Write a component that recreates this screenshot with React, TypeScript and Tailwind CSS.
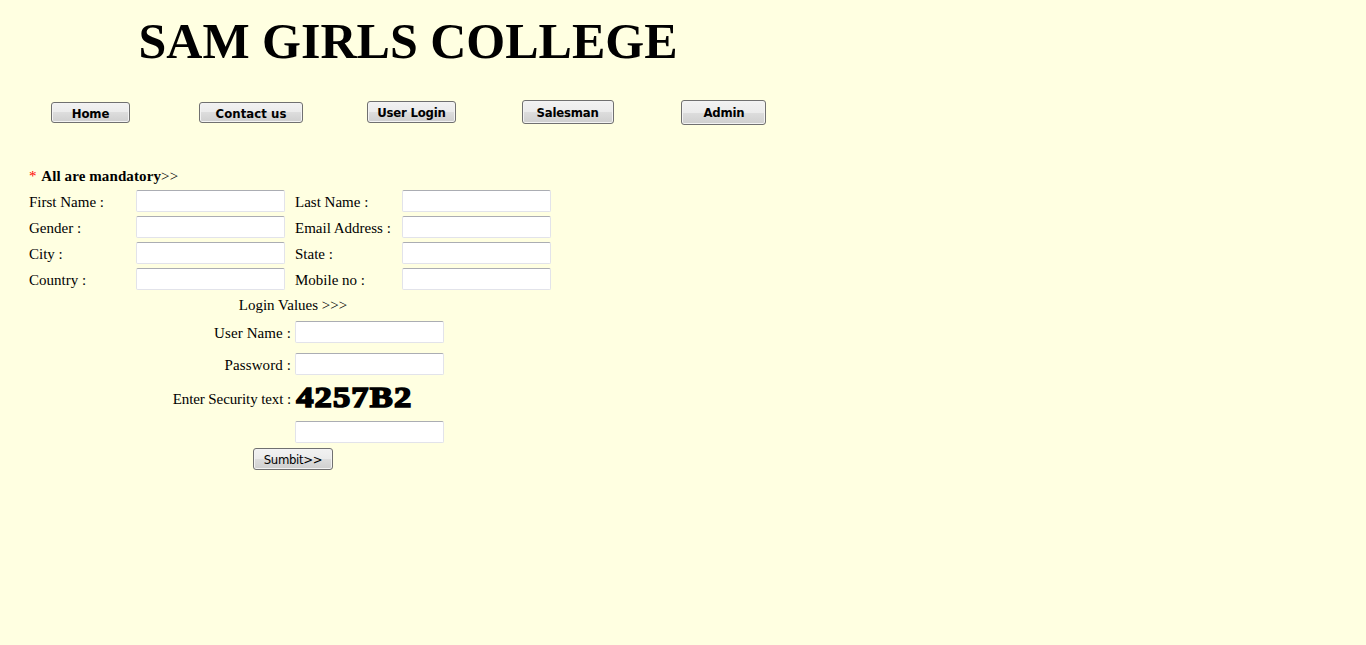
import React from "react";

const serif = "font-['Liberation_Serif','Times_New_Roman',serif]";
const buttonBase =
  "flex shrink-0 items-center justify-center rounded-[3px] border border-[#707070] bg-[linear-gradient(#f2f2f2_0%,#ebebeb_50%,#dddddd_50%,#cfcfcf_100%)] shadow-[inset_0_0_0_1px_#f3f3f3] font-['DejaVu_Sans_Condensed','DejaVu_Sans',sans-serif] text-[13px] leading-none text-black whitespace-pre";

const navItems = [
  { label: "Home", box: "mt-[2px] h-[21px] w-[79px]", text: "pt-px tracking-[-0.1px]" },
  { label: "Contact us", box: "mt-[2px] ml-[69px] h-[21px] w-[104px]", text: "pt-px tracking-[0.05px]" },
  { label: "User Login", box: "mt-px ml-[64px] h-[22px] w-[89px]", text: "tracking-[-0.2px]" },
  { label: "Salesman", box: "ml-[66px] h-[24px] w-[92px]", text: "-ml-px tracking-[-0.2px]" },
  { label: "Admin", box: "ml-[67px] h-[25px] w-[85px]", text: "ml-px tracking-[-0.2px]" },
];

const profileRows = [
  ["First Name :", "Last Name :"],
  ["Gender :", "Email Address :"],
  ["City :", "State :"],
  ["Country :", "Mobile no :"],
];

function Field({ label, type = "text" }: { label: string; type?: string }) {
  return (
    <input
      type={type}
      aria-label={label}
      className="block h-[22px] w-[149px] rounded-[2px] border border-[#e2e3ea] border-t-[#abadb3] bg-white px-1 text-[13px] outline-none"
    />
  );
}

export default function App() {
  return (
    <main className={`h-[645px] w-full overflow-hidden bg-[#ffffe1] text-[15px] leading-[18px] text-black ${serif}`}>
      <h1 className="h-[100px] pt-[13px] pl-[138.5px] text-[50px] leading-[56px] font-bold whitespace-nowrap">
        SAM GIRLS COLLEGE
      </h1>

      <nav className="flex h-[67px] items-start pl-[51px]">
        {navItems.map((item) => (
          <button key={item.label} className={`${buttonBase} font-bold ${item.box}`}>
            <span className={item.text}>{item.label}</span>
          </button>
        ))}
      </nav>

      <form className="pl-[29px]" onSubmit={(event) => event.preventDefault()}>
        <p className="h-[23px] whitespace-nowrap">
          <span className="text-[#ff0000]">*</span>{" "}
          <b className="ml-px tracking-[0.1px]">All are mandatory</b>
          <span className="tracking-[0.4px]">&gt;&gt;</span>
        </p>

        <div>
          {profileRows.map(([left, right]) => (
            <div key={left} className="grid h-[26px] grid-cols-[107px_159px_107px_149px] items-start">
              <span className="pt-[3px]">{left}</span>
              <Field label={left} />
              <span className="pt-[3px]">{right}</span>
              <Field label={right} />
            </div>
          ))}
        </div>

        <div className="w-[528px]">
          <p className="h-[27px] pt-[2px] text-center">Login Values &gt;&gt;&gt;</p>
          <div className="grid grid-cols-[262px_1fr] grid-rows-[32px_32px_36px_27px] gap-x-[4px]">
            <span className="pt-[3px] text-right tracking-[0.1px]">User Name :</span>
            <Field label="User Name" />
            <span className="pt-[3px] text-right tracking-[0.1px]">Password :</span>
            <Field label="Password" type="password" />
            <span className="pt-[5px] text-right tracking-[-0.1px]">Enter Security text :</span>
            <span className="-mt-[3px] block h-[30px] origin-left scale-x-[1.15] pl-px text-[30px] leading-[30px] font-bold tracking-[1px] whitespace-nowrap [-webkit-text-stroke:1.6px_black]">
              4257B2
            </span>
            <span />
            <Field label="Security text" />
          </div>
          <button type="submit" className={`${buttonBase} ml-[224px] h-[22px] w-[80px]`}>
            <span className="tracking-[-0.3px]">Sumbit&gt;&gt;</span>
          </button>
        </div>
      </form>
    </main>
  );
}
